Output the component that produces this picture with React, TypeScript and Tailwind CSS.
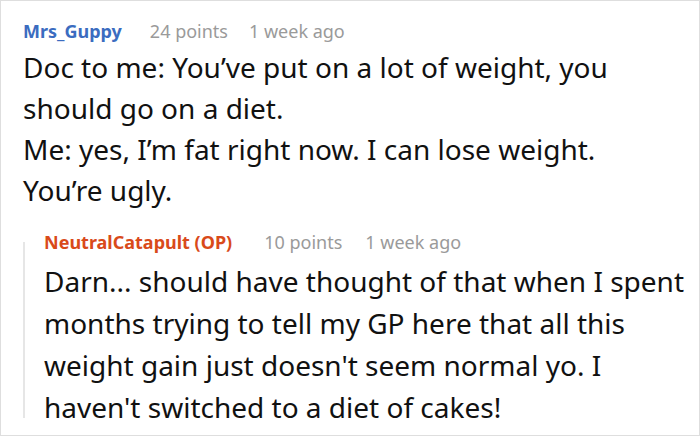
export default function App() {
	return (
		<div
			className="h-[436px] w-[700px] overflow-hidden border border-[#dedede] bg-white pl-[22px] pt-[18px]"
			style={{ fontFamily: '"Noto Sans", "Open Sans", sans-serif' }}
		>
			{/* Parent comment */}
			<div>
				<div className="flex items-baseline text-[18px] leading-[24px]">
					<span className="font-bold text-[#3b6cc0]">Mrs_Guppy</span>
					<span className="ml-[28px] text-[#9a9a9a]">24 points</span>
					<span className="ml-[21px] text-[#9a9a9a]">1 week ago</span>
				</div>
				<p className="mt-[4px] w-[640px] text-[28px] leading-[41px] text-[#111]">
					Doc to me: You’ve put on a lot of weight, you should go on a diet.
					<br />
					Me: yes, I’m fat right now. I can lose weight. You’re ugly.
				</p>
			</div>

			{/* Reply */}
			<div className="relative mt-[19px] pl-[21px]">
				<div className="absolute left-0 top-[12px] h-[176px] w-[2px] bg-[#e6e6e6]" />
				<div className="flex items-baseline text-[18px] leading-[24px]">
					<span className="font-bold text-[#d94a1a]">NeutralCatapult (OP)</span>
					<span className="ml-[32px] text-[#9a9a9a]">10 points</span>
					<span className="ml-[23px] text-[#9a9a9a]">1 week ago</span>
				</div>
				<p className="mt-[6px] w-[650px] text-[28px] leading-[42px] text-[#111]">
					Darn... should have thought of that when I spent months trying to
					tell my GP here that all this weight gain just doesn't seem normal
					yo. I haven't switched to a diet of cakes!
				</p>
			</div>
		</div>
	);
}
